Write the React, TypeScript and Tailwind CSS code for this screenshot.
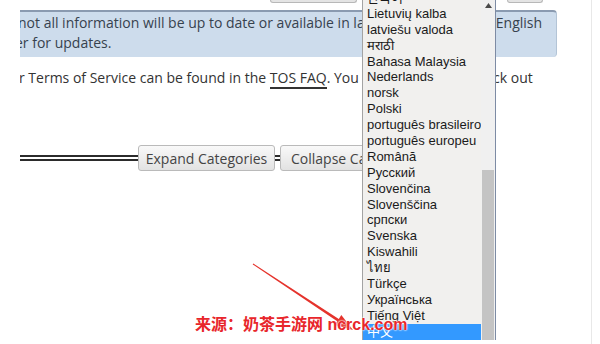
const languages = [
  "한국어",
  "Lietuvių kalba",
  "latviešu valoda",
  "मराठी",
  "Bahasa Malaysia",
  "Nederlands",
  "norsk",
  "Polski",
  "português brasileiro",
  "português europeu",
  "Română",
  "Русский",
  "Slovenčina",
  "Slovenščina",
  "српски",
  "Svenska",
  "Kiswahili",
  "ไทย",
  "Türkçe",
  "Українська",
  "Tiếng Việt",
  "中文",
];

function DoubleLine({ width }: { width: string }) {
  return <div className={`${width} h-[6px] border-y-2 border-[#2b2b2b]`} />;
}

function LanguageList() {
  return (
    <div className="absolute left-[362px] top-[-10px] flex h-[350px] w-[134px] overflow-hidden border-l border-r border-l-[#a3a3a3] border-r-[#7d8ba4] bg-[#f1f0ee] font-['Liberation_Sans','Noto_Sans_CJK_KR',sans-serif] text-[13px] text-[#1a1a1a]">
      <ul className="flex-1">
        {languages.map((lang) => (
          <li
            key={lang}
            className={
              lang === "中文"
                ? "h-[15.9px] bg-[#3399ff] pl-[4px] leading-[15.9px] text-white"
                : "h-[15.9px] pl-[4px] leading-[15.9px] whitespace-nowrap"
            }
          >
            {lang}
          </li>
        ))}
      </ul>
      <div className="flex w-[14px] flex-col bg-[#f0f0f0]">
        <div className="flex h-[180px] justify-center pt-[13px]">
          <svg width="7" height="5" viewBox="0 0 7 5">
            <polygon points="3.5,0 7,5 0,5" fill="#4a4a4a" />
          </svg>
        </div>
        <div className="mx-[1px] flex-1 bg-[#c4c4c4]" />
      </div>
    </div>
  );
}

export default function App() {
  return (
    <div className="relative h-[344px] w-[600px] overflow-hidden bg-white font-['Open_Sans',sans-serif] text-[14px] text-[#333]">
      <div className="h-full w-[592px] border-r border-[#e8e8e8]">
        <div className="ml-[20px] h-full overflow-hidden">
          <div className="flex h-[3px]">
            <div className="ml-[250px] w-[87px] rounded-b-[3px] border border-t-0 border-[#b8b8b8] bg-[#e4e4e4]" />
            <div className="ml-[150px] w-[36px] rounded-b-[3px] border border-t-0 border-[#b8b8b8] bg-[#e4e4e4]" />
          </div>

          <div className="mt-[7px] h-[47px] w-[537px] rounded-r-[4px] border-t-2 border-r border-t-[#8a9ab0] border-r-[#b3c4d6] bg-[#cddcec] pt-[1px] leading-[20px] text-[#37424e]">
            <div className="ml-[-2px] whitespace-nowrap">not all information will be up to date or available in languages other than English</div>
            <div className="ml-[-5px] whitespace-nowrap">er for updates.</div>
          </div>

          <p className="ml-[-1px] mt-[11px] whitespace-nowrap leading-[20px]">
            r Terms of Service can be found in the{" "}
            <span className="border-b-2 border-[#333]">TOS FAQ</span>. You may also like to{" "}
            <span className="ml-[3px]">check out</span>
          </p>

          <div className="mt-[57px] flex items-center">
            <DoubleLine width="w-[118px]" />
            <button className="h-[26px] w-[137px] rounded-[3px] border border-[#bababa] bg-gradient-to-b from-[#f9f9f9] to-[#e2e2e2] text-[14px] text-[#444]">
              Expand Categories
            </button>
            <DoubleLine width="w-[5px]" />
            <button className="h-[26px] rounded-[3px] border border-[#bababa] bg-gradient-to-b from-[#f9f9f9] to-[#e2e2e2] px-[10px] text-[14px] text-[#444]">
              Collapse Categories
            </button>
          </div>
        </div>
      </div>

      <LanguageList />

      <svg className="absolute left-0 top-0" width="600" height="344">
        <polygon
          points="253.3,263.6 338.8,318.9 341.3,315 353,330 334.7,325 337.2,321.3 252.7,264.4"
          fill="#e5332c"
        />
      </svg>

      <div className="absolute left-[195px] top-[315px] whitespace-nowrap font-['Liberation_Sans','Noto_Sans_CJK_SC',sans-serif] text-[16px] font-bold leading-[20px] text-[#e8262b] [text-shadow:0_0_2px_#fff,0_0_2px_#fff,0_0_1px_#fff]">
        来源：奶茶手游网 ncrck.com
      </div>
    </div>
  );
}
